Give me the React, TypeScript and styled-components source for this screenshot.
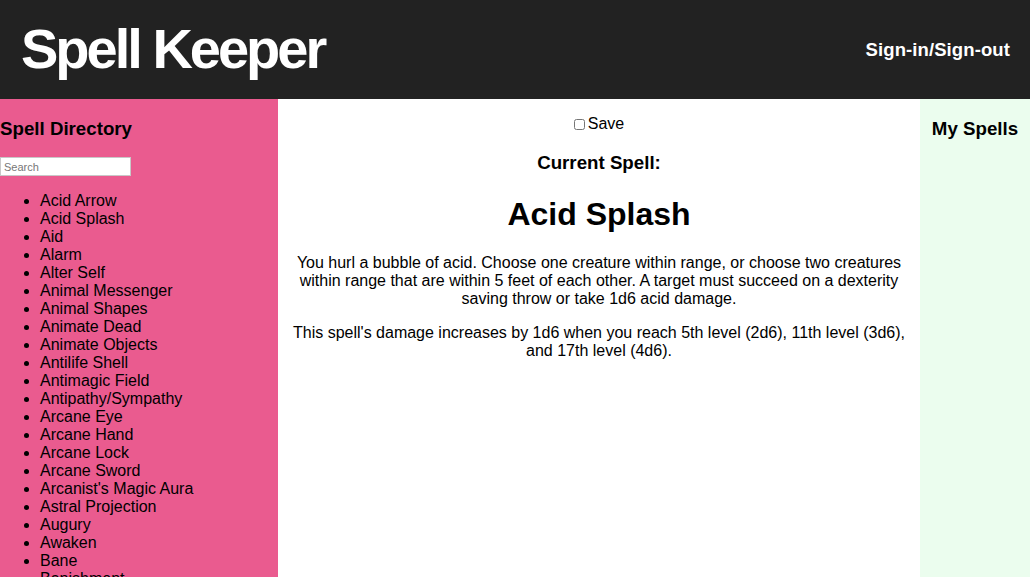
import React from 'react';
import styled, { createGlobalStyle } from 'styled-components';

const spells = [
    'Acid Arrow',
    'Acid Splash',
    'Aid',
    'Alarm',
    'Alter Self',
    'Animal Messenger',
    'Animal Shapes',
    'Animate Dead',
    'Animate Objects',
    'Antilife Shell',
    'Antimagic Field',
    'Antipathy/Sympathy',
    'Arcane Eye',
    'Arcane Hand',
    'Arcane Lock',
    'Arcane Sword',
    "Arcanist's Magic Aura",
    'Astral Projection',
    'Augury',
    'Awaken',
    'Bane',
    'Banishment',
    'Barkskin',
    'Beacon of Hope',
]

export default function App() {
    return (
        <Page>
            <GlobalStyle />
            <Header>
                <Title>Spell Keeper</Title>
                <SignLink>Sign-in/Sign-out</SignLink>
            </Header>
            <Main>
                <Directory>
                    <PanelHeading>Spell Directory</PanelHeading>
                    <SearchBox type="text" placeholder="Search" />
                    <SpellList>
                        {spells.map(name => <SpellItem key={name}>{name}</SpellItem>)}
                    </SpellList>
                </Directory>
                <Current>
                    <SaveRow>
                        <input type="checkbox" />Save
                    </SaveRow>
                    <PanelHeading>Current Spell:</PanelHeading>
                    <SpellName>Acid Splash</SpellName>
                    <Description>
                        You hurl a bubble of acid. Choose one creature within range, or choose two creatures within range that are within 5 feet of each other. A target must succeed on a dexterity saving throw or take 1d6 acid damage.
                    </Description>
                    <Description>
                        This spell's damage increases by 1d6 when you reach 5th level (2d6), 11th level (3d6), and 17th level (4d6).
                    </Description>
                </Current>
                <MySpells>
                    <PanelHeading>My Spells</PanelHeading>
                </MySpells>
            </Main>
        </Page>
    )
}

const GlobalStyle = createGlobalStyle`
    html, body {
        margin: 0;
        padding: 0;
        overflow: hidden;
        font-family: "Liberation Sans", Arial, Helvetica, sans-serif;
        font-size: 16px;
        color: #000;
    }
`

const Page = styled.div`
    width: 1030px;
    height: 577px;
    display: flex;
    flex-direction: column;
    overflow: hidden;
`

const Header = styled.header`
    height: 99px;
    flex-shrink: 0;
    background-color: #222222;
    display: flex;
    align-items: center;
    justify-content: space-between;
    padding: 0 20px 0 21px;
`

const Title = styled.h1`
    margin: 0;
    color: #fff;
    font-size: 56px;
    font-weight: bold;
    letter-spacing: -3px;
    line-height: 1;
    padding-bottom: 2px;
`

const SignLink = styled.div`
    color: #fff;
    font-size: 18.5px;
    font-weight: bold;
    letter-spacing: 0.1px;
    padding-top: 1px;
`

const Main = styled.div`
    flex: 1;
    display: flex;
    min-height: 0;
`

const Directory = styled.aside`
    width: 278px;
    flex-shrink: 0;
    background-color: #ea5b8f;
    overflow: hidden;
`

const PanelHeading = styled.h3`
    font-size: 18.72px;
    font-weight: bold;
    margin: 18.72px 0;
`

const SearchBox = styled.input`
    display: block;
    box-sizing: border-box;
    width: 131px;
    height: 19px;
    margin: -1px 0 0;
    padding: 1px 3px;
    border: 1px solid #c8c8c8;
    background: #fff;
    font-family: "Liberation Sans", Arial, sans-serif;
    font-size: 11px;
    &::placeholder {
        color: #777;
    }
`

const SpellList = styled.ul`
    margin: 16px 0;
    padding-left: 40px;
`

const SpellItem = styled.li`
    line-height: 18px;
`

const Current = styled.section`
    width: 642px;
    flex-shrink: 0;
    background-color: #fff;
    text-align: center;
    overflow: hidden;
`

const SaveRow = styled.p`
    margin: 16px 0;
    line-height: 18px;
    input {
        margin: 0 3px 0 0;
        width: 11px;
        height: 11px;
        vertical-align: -1px;
    }
`

const SpellName = styled.h1`
    font-size: 32px;
    font-weight: bold;
    margin: 22.5px 0 20.5px;
`

const Description = styled.p`
    margin: 16px 0;
    line-height: 18px;
`

const MySpells = styled.aside`
    flex: 1;
    background-color: #ebfdee;
    text-align: center;
`
